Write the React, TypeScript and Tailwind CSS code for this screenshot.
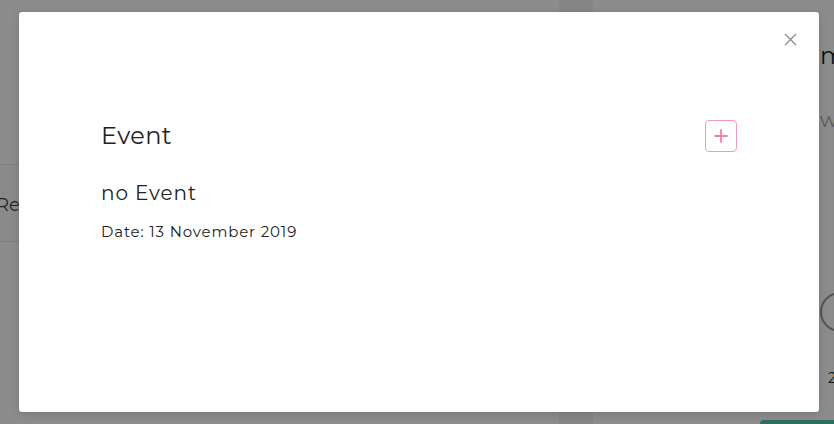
import React from 'react';

const Plus = () => (
  <svg width="14" height="14" viewBox="0 0 14 14" fill="none">
    <path d="M7 1v12M1 7h12" stroke="#f3809f" strokeWidth="1.8" strokeLinecap="round" />
  </svg>
);

const Close = () => (
  <svg width="13" height="13" viewBox="0 0 13 13" fill="none">
    <path d="M1 1l11 11M12 1L1 12" stroke="#8a8a8a" strokeWidth="1.3" />
  </svg>
);

const Background = () => (
  <div className="flex h-full w-full">
    {/* left column */}
    <div className="flex w-[559px] shrink-0 flex-col bg-white">
      <div className="h-[165px] border-b border-[#e6e6e6]" />
      <div className="flex h-[77px] items-center border-b border-[#e6e6e6] bg-[#fcfcfc] pt-[4px]">
        <span className="-ml-[4px] text-[18px] text-[#444]">Report</span>
      </div>
      <div className="flex-1" />
    </div>
    {/* gutter */}
    <div className="w-[34px] shrink-0 bg-[#f2f2f2]" />
    {/* right column */}
    <div className="flex min-w-0 flex-1 flex-col overflow-hidden bg-white pl-[227px]">
      <div className="mt-[40px] whitespace-nowrap text-[24px] leading-[32px] text-[#1c1c1c]">me</div>
      <div className="mt-[34px] whitespace-nowrap text-[20px] leading-[28px] text-[#aaa]">we</div>
      <div className="mt-[158px] h-[40px] w-[40px] shrink-0 rounded-full border-2 border-[#9a9a9a]" />
      <div className="mt-[36px] ml-[8px] text-[14px] leading-[20px] text-[#222]">2</div>
      <div className="mt-auto ml-[-60px] h-[4px] shrink-0 rounded-tl-[8px] bg-[#55c8b2]" />
    </div>
  </div>
);

export default function App() {
  return (
    <div className="relative h-[424px] w-[834px] overflow-hidden font-['Montserrat','Open_Sans',sans-serif]">
      <Background />
      <div className="absolute inset-0 bg-black/45" />
      <div className="absolute left-[19px] top-[12px] h-[400px] w-[800px] rounded-[3px] bg-white shadow-[0_2px_8px_rgba(0,0,0,0.15)]">
        <button className="absolute right-[22px] top-[21px] flex h-[13px] w-[13px] items-center justify-center">
          <Close />
        </button>
        <div className="px-[82px] pt-[108px] text-[#222]">
          <div className="flex h-[32px] items-center justify-between">
            <h2 className="text-[24px] leading-[32px] tracking-[0.4px]">Event</h2>
            <button className="flex h-[32px] w-[32px] items-center justify-center rounded-[4px] border border-[#f59ab4]">
              <Plus />
            </button>
          </div>
          <p className="mt-[27px] text-[20px] leading-[28px] tracking-[0.9px]">no Event</p>
          <p className="mt-[15px] text-[15px] leading-[20px] tracking-[0.85px]">Date: 13 November 2019</p>
        </div>
      </div>
    </div>
  );
}
